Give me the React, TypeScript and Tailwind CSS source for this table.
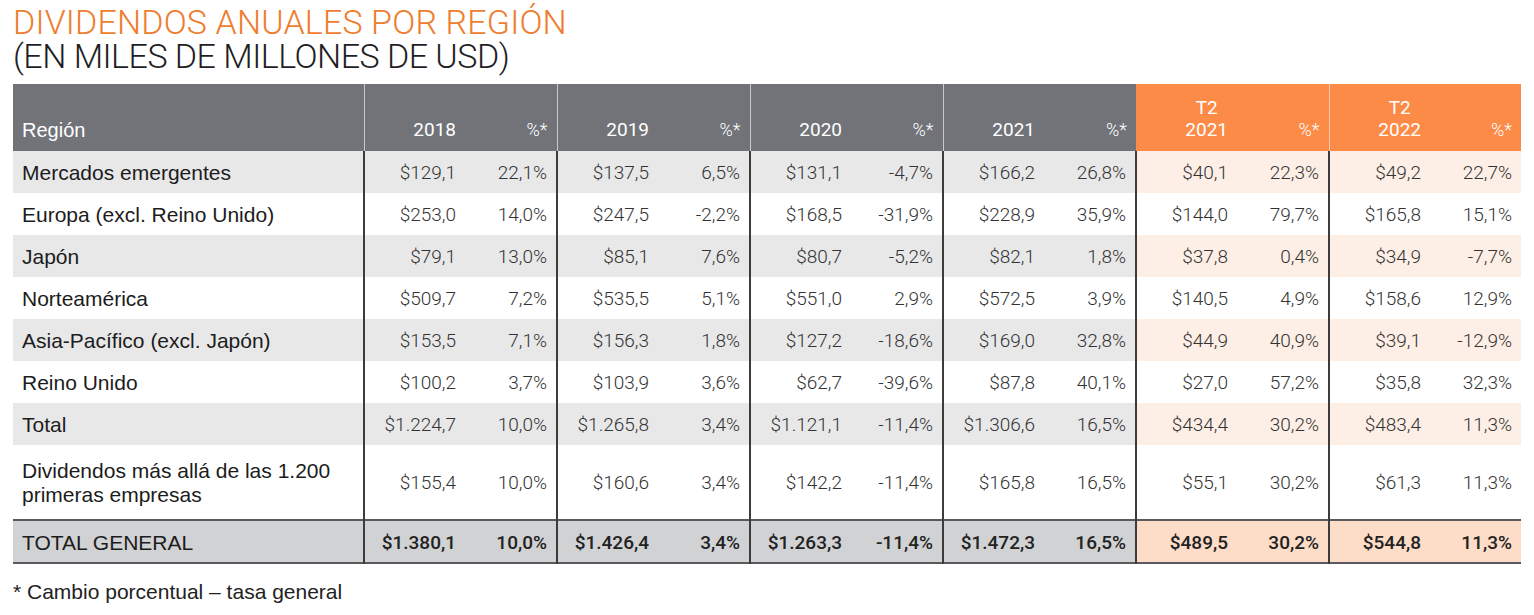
import React from "react";

type Row = { label: React.ReactNode; vals: string[]; tall?: boolean };

const rows: Row[] = [
  { label: "Mercados emergentes", vals: ["$129,1", "22,1%", "$137,5", "6,5%", "$131,1", "-4,7%", "$166,2", "26,8%", "$40,1", "22,3%", "$49,2", "22,7%"] },
  { label: "Europa (excl. Reino Unido)", vals: ["$253,0", "14,0%", "$247,5", "-2,2%", "$168,5", "-31,9%", "$228,9", "35,9%", "$144,0", "79,7%", "$165,8", "15,1%"] },
  { label: "Japón", vals: ["$79,1", "13,0%", "$85,1", "7,6%", "$80,7", "-5,2%", "$82,1", "1,8%", "$37,8", "0,4%", "$34,9", "-7,7%"] },
  { label: "Norteamérica", vals: ["$509,7", "7,2%", "$535,5", "5,1%", "$551,0", "2,9%", "$572,5", "3,9%", "$140,5", "4,9%", "$158,6", "12,9%"] },
  { label: "Asia-Pacífico (excl. Japón)", vals: ["$153,5", "7,1%", "$156,3", "1,8%", "$127,2", "-18,6%", "$169,0", "32,8%", "$44,9", "40,9%", "$39,1", "-12,9%"] },
  { label: "Reino Unido", vals: ["$100,2", "3,7%", "$103,9", "3,6%", "$62,7", "-39,6%", "$87,8", "40,1%", "$27,0", "57,2%", "$35,8", "32,3%"] },
  { label: "Total", vals: ["$1.224,7", "10,0%", "$1.265,8", "3,4%", "$1.121,1", "-11,4%", "$1.306,6", "16,5%", "$434,4", "30,2%", "$483,4", "11,3%"] },
  {
    label: (
      <>
        Dividendos más allá de las 1.200
        <br />
        primeras empresas
      </>
    ),
    vals: ["$155,4", "10,0%", "$160,6", "3,4%", "$142,2", "-11,4%", "$165,8", "16,5%", "$55,1", "30,2%", "$61,3", "11,3%"],
    tall: true,
  },
];

const totalGeneral = ["$1.380,1", "10,0%", "$1.426,4", "3,4%", "$1.263,3", "-11,4%", "$1.472,3", "16,5%", "$489,5", "30,2%", "$544,8", "11,3%"];

const numFont = { fontFamily: "Roboto, 'Liberation Sans', sans-serif" };

export default function App() {
  return (
    <div className="w-[1534px] h-[615px] bg-white text-[#222]" style={{ fontFamily: "'Liberation Sans', Arial, sans-serif" }}>
      <div className="pl-[13px] pt-[5px]" style={numFont}>
        <div className="text-[34px] leading-[34px] font-light text-[#ee7d2e] tracking-[0.15px]">DIVIDENDOS ANUALES POR REGIÓN</div>
        <div className="text-[34px] leading-[34px] font-light text-[#1e1e24] tracking-[-0.5px]">(EN MILES DE MILLONES DE USD)</div>
      </div>
      <table className="ml-[13px] mt-[11px] w-[1508px] table-fixed border-collapse">
        <colgroup>
          <col className="w-[351px]" />
          {[0, 1, 2, 3, 4].map((i) => (
            <React.Fragment key={i}>
              <col className="w-[101px]" />
              <col className="w-[92px]" />
            </React.Fragment>
          ))}
          <col className="w-[101px]" />
          <col className="w-[91px]" />
        </colgroup>
        <thead>
          <tr className="h-[67px] text-white text-[19px]">
            <th className="bg-[#717379] text-left align-bottom font-normal pl-[9px] pb-[10px] leading-[22px] text-[20px]">Región</th>
            {["2018", "2019", "2020", "2021"].map((y) => (
              <React.Fragment key={y}>
                <th className="bg-[#717379] text-right align-bottom font-normal pr-[9px] pb-[10px] leading-[22px] border-l border-[#c9cacd]" style={numFont}>
                  {y}
                </th>
                <th className="bg-[#717379] text-right align-bottom font-light pr-[9px] pb-[10px] leading-[22px] text-[18px]" style={numFont}>
                  %*
                </th>
              </React.Fragment>
            ))}
            {["2021", "2022"].map((y, i) => (
              <React.Fragment key={y}>
                <th className={`bg-[#fd8b48] text-right align-bottom font-normal pr-[9px] pb-[10px] leading-[22px] ${i === 1 ? "border-l border-[#fcc9a8]" : ""}`} style={numFont}>
                  <span className="inline-block text-center">
                    T2
                    <br />
                    {y}
                  </span>
                </th>
                <th className="bg-[#fd8b48] text-right align-bottom font-light pr-[9px] pb-[10px] leading-[22px] text-[18px]" style={numFont}>
                  %*
                </th>
              </React.Fragment>
            ))}
          </tr>
        </thead>
        <tbody>
          {rows.map((r, ri) => {
            const shaded = ri % 2 === 0;
            return (
              <tr key={ri} className={`${r.tall ? "h-[75px]" : "h-[42px]"} text-[19px]`}>
                <td className={`pl-[9px] pt-[2px] text-left leading-[24px] text-[21px] font-normal text-[#1c1c1c] ${shaded ? "bg-[#e8e8e9]" : "bg-white"}`}>{r.label}</td>
                {r.vals.map((v, vi) => {
                  const group = Math.floor(vi / 2);
                  const orange = group >= 4;
                  const bg = shaded ? (orange ? "bg-[#fdefe6]" : "bg-[#e8e8e9]") : "bg-white";
                  const border = vi % 2 === 0 ? "border-l-2 border-[#3c3c3c]" : "";
                  return (
                    <td key={vi} className={`text-right pr-[9px] pt-[3px] font-light text-[#333] ${bg} ${border}`} style={numFont}>
                      {v}
                    </td>
                  );
                })}
              </tr>
            );
          })}
          <tr className="h-[43px] text-[19px] border-y-2 border-[#5a5a5e]">
            <td className="pl-[9px] pt-[2px] text-left bg-[#d1d2d4] font-normal text-[21px] text-[#1c1c1c]">TOTAL GENERAL</td>
            {totalGeneral.map((v, vi) => {
              const group = Math.floor(vi / 2);
              const orange = group >= 4;
              const border = vi % 2 === 0 ? "border-l-2 border-l-[#3c3c3c]" : "";
              return (
                <td key={vi} className={`text-right pr-[9px] pt-[3px] font-medium text-[#222] ${orange ? "bg-[#fddcc8]" : "bg-[#d1d2d4]"} ${border}`} style={numFont}>
                  {v}
                </td>
              );
            })}
          </tr>
        </tbody>
      </table>
      <div className="pl-[13px] mt-[16px] text-[21px] leading-[24px] text-[#222]">* Cambio porcentual – tasa general</div>
    </div>
  );
}
